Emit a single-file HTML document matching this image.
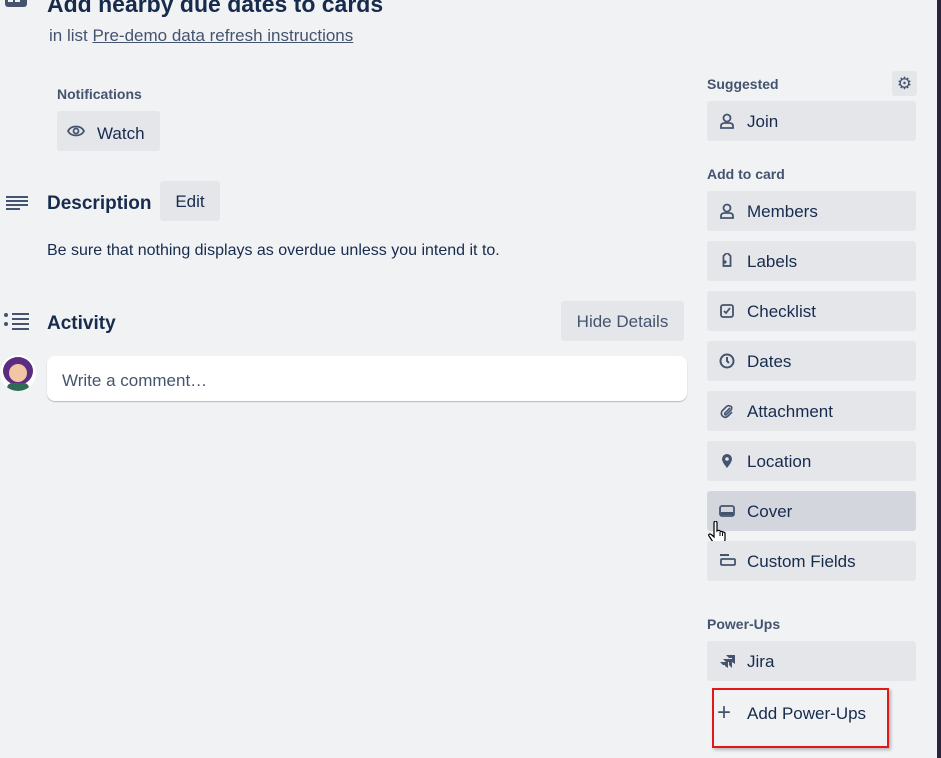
<!DOCTYPE html>
<html><head><meta charset="utf-8"><style>
body{margin:0;width:941px;height:758px;background:#f1f2f4;font-family:"Liberation Sans",sans-serif;color:#172b4d;position:relative;overflow:hidden}
.a{position:absolute}
.btn{position:absolute;left:707px;width:209px;height:40px;background:#e5e6ea;border-radius:3px;font-size:17px;color:#172b4d;line-height:42px}
.btn span{position:absolute;left:40px}
.btn svg{position:absolute;left:12px;top:12px}
.h{font-size:14px;font-weight:bold;color:#44546f}
</style></head><body>
<div class="a" style="right:0;top:0;width:4px;height:758px;background:#2b2440"></div>
<svg class="a" style="left:4px;top:-6px" width="24" height="16"><rect x="1" y="0" width="22" height="13" rx="3" fill="#44546f"/><rect x="4" y="6" width="5" height="2" fill="#f1f2f4"/><rect x="11" y="6" width="5" height="2" fill="#f1f2f4"/></svg>
<div class="a" style="left:47px;top:-9px;font-size:23px;font-weight:bold;color:#172b4d">Add nearby due dates to cards</div>
<div class="a" style="left:49px;top:26px;font-size:17px;color:#44546f">in list <u>Pre-demo data refresh instructions</u></div>
<div class="a h" style="left:57px;top:86px">Notifications</div>
<div class="a" style="left:57px;top:111px;width:103px;height:40px;background:#e5e6ea;border-radius:3px"></div>
<svg class="a" style="left:67px;top:124px" width="18" height="14"><path d="M1 7C4 1 14 1 17 7C14 13 4 13 1 7Z" fill="none" stroke="#44546f" stroke-width="1.8"/><circle cx="9" cy="7" r="2.5" fill="none" stroke="#44546f" stroke-width="1.8"/></svg>
<div class="a" style="left:97px;top:124px;font-size:17px">Watch</div>
<svg class="a" style="left:5px;top:195px" width="24" height="16"><path d="M1 2H23M1 6H23M1 10H23M1 14H15" stroke="#44546f" stroke-width="2"/></svg>
<div class="a" style="left:47px;top:193px;font-size:19px;font-weight:bold">Description</div>
<div class="a" style="left:160px;top:181px;width:60px;height:40px;background:#e5e6ea;border-radius:3px;line-height:42px;text-align:center;font-size:17px">Edit</div>
<div class="a" style="left:47px;top:242px;font-size:16px">Be sure that nothing displays as overdue unless you intend it to.</div>
<svg class="a" style="left:3px;top:312px" width="26" height="18"><circle cx="3" cy="3" r="2" fill="#44546f"/><circle cx="3" cy="12" r="2" fill="#44546f"/><path d="M9 2H26M9 7H26M9 12H26M9 17H26" stroke="#44546f" stroke-width="2"/></svg>
<div class="a" style="left:47px;top:313px;font-size:19px;font-weight:bold">Activity</div>
<div class="a" style="left:561px;top:301px;width:123px;height:40px;background:#e5e6ea;border-radius:3px;line-height:42px;text-align:center;font-size:17px;color:#44546f">Hide Details</div>
<div class="a" style="left:0;top:355px;width:36px;height:36px;border-radius:50%;background:#fff;overflow:hidden"><div style="position:absolute;left:3px;top:2px;width:30px;height:28px;background:#5b2d82;border-radius:50%"></div><div style="position:absolute;left:9px;top:9px;width:18px;height:18px;background:#f2c6a5;border-radius:50%"></div><div style="position:absolute;left:7px;top:28px;width:22px;height:10px;background:#2d6b55;border-radius:6px"></div></div>
<div class="a" style="left:47px;top:356px;width:640px;height:45px;background:#fff;border-radius:8px;box-shadow:0 1px 1px #b3b9c4"></div>
<div class="a" style="left:62px;top:371px;font-size:17px;color:#44546f">Write a comment…</div>
<div class="a h" style="left:707px;top:76px">Suggested</div>
<div class="a" style="left:892px;top:71px;width:25px;height:25px;background:#e5e6ea;border-radius:3px;text-align:center;line-height:25px;font-size:17px;color:#44546f">⚙</div>
<div class="btn" style="top:101px"><svg width="16" height="16"><circle cx="8" cy="5" r="3.5" fill="none" stroke="#44546f" stroke-width="1.8"/><path d="M2 15V13Q2 10 6 10H10Q14 10 14 13V15Z" fill="none" stroke="#44546f" stroke-width="1.8"/></svg><span>Join</span></div>
<div class="a h" style="left:707px;top:166px">Add to card</div>
<div class="btn" style="top:191px"><svg width="16" height="16"><circle cx="8" cy="5" r="3.5" fill="none" stroke="#44546f" stroke-width="1.8"/><path d="M2 15V13Q2 10 6 10H10Q14 10 14 13V15Z" fill="none" stroke="#44546f" stroke-width="1.8"/></svg><span>Members</span></div>
<div class="btn" style="top:241px"><svg width="16" height="16"><path d="M9 2H14V7L7 14L2 9Z" fill="none" stroke="#44546f" stroke-width="1.8" transform="rotate(-45 8 8)"/><circle cx="6" cy="9" r="1.6" fill="#44546f"/></svg><span>Labels</span></div>
<div class="btn" style="top:291px"><svg width="16" height="16"><rect x="2" y="2" width="12" height="12" rx="2" fill="none" stroke="#44546f" stroke-width="1.8"/><path d="M5 8L7 10L11 5" fill="none" stroke="#44546f" stroke-width="1.8"/></svg><span>Checklist</span></div>
<div class="btn" style="top:341px"><svg width="16" height="16"><circle cx="8" cy="8" r="6.5" fill="none" stroke="#44546f" stroke-width="2"/><path d="M8 4V8L10 10" fill="none" stroke="#44546f" stroke-width="2"/></svg><span>Dates</span></div>
<div class="btn" style="top:391px"><svg width="16" height="16"><path d="M11 5L6 10Q5 12 7 12L12 7Q14 4 11 3Q9 2 7 4L3 8Q1 12 5 14Q7 15 9 13L13 9" fill="none" stroke="#44546f" stroke-width="1.6"/></svg><span>Attachment</span></div>
<div class="btn" style="top:441px"><svg width="16" height="16"><path d="M8 15Q3 9 3 6A5 5 0 0 1 13 6Q13 9 8 15Z" fill="#44546f"/><circle cx="8" cy="6" r="1.8" fill="#e5e6ea"/></svg><span>Location</span></div>
<div class="btn" style="top:491px;background:#d3d6dc"><svg width="16" height="16"><rect x="1" y="3" width="14" height="10" rx="2" fill="none" stroke="#44546f" stroke-width="1.8"/><rect x="2" y="9" width="12" height="3" fill="#44546f"/></svg><span>Cover</span></div>
<svg class="a" style="left:708px;top:521px" width="20" height="26"><path d="M6 2Q6 0 7.5 0Q9 0 9 2V10Q10 9 11.5 9.5Q12 10 12.5 10.5Q14 10 15 11Q16 11 17 12V19Q16 24 11 24Q7 24 5 21L1 15Q0 13 2 13Q3 13 6 16Z" fill="#fff" stroke="#000" stroke-width="1.2"/><path d="M12 11V15M14.5 11.5V15" stroke="#000" stroke-width="1"/></svg>
<div class="btn" style="top:541px"><svg width="18" height="16"><path d="M1 2H10" stroke="#44546f" stroke-width="2"/><rect x="2" y="6" width="14" height="6" rx="1" fill="none" stroke="#44546f" stroke-width="1.8"/></svg><span>Custom Fields</span></div>
<div class="a h" style="left:707px;top:616px">Power-Ups</div>
<div class="btn" style="top:641px"><svg width="18" height="16"><path d="M4 6H13V15L10 12V9H7ZM1 9H9V15L6 13V12H4ZM7 2H16V11L13 9V5H10Z" fill="#44546f"/></svg><span>Jira</span></div>
<div class="a" style="left:712px;top:688px;width:173px;height:56px;border:2px solid #e01818;box-shadow:2px 2px 3px rgba(0,0,0,.25)"></div>
<div class="a" style="left:717px;top:699px;font-size:24px;color:#44546f">+</div>
<div class="a" style="left:747px;top:704px;font-size:17px">Add Power-Ups</div>
</body></html>
